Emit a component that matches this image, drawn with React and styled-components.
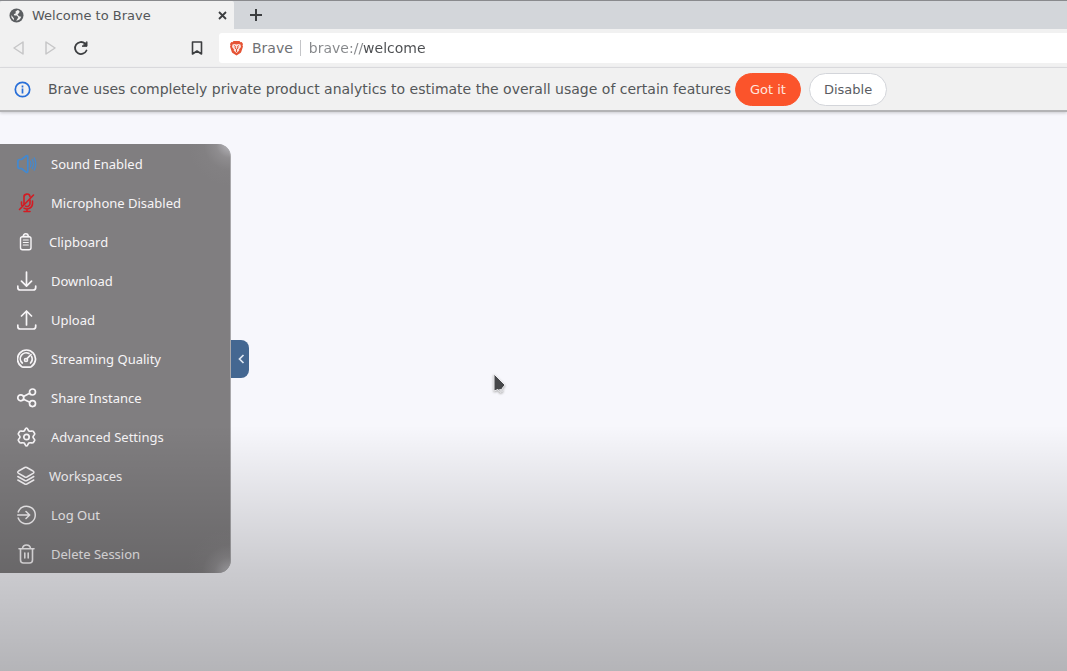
import React, { useState } from "react";
import styled, { createGlobalStyle } from "styled-components";

const GlobalStyle = createGlobalStyle`
  *, *::before, *::after { box-sizing: border-box; }
  body { margin: 0; background: #f7f7fc; }
  button, input { font: inherit; margin: 0; }
`;

const Page = styled.div`
  display: flex;
  flex-direction: column;
  min-height: 100vh;
  position: relative;
  overflow: hidden;
  background: #f7f7fc;
  color: #545759;
  font-family: "DejaVu Sans", sans-serif;
  font-size: 14px;
`;

const TabStrip = styled.header`
  display: flex;
  align-items: stretch;
  height: 29px;
  border-top: 1px solid #898a8d;
  background: #d3d6da;
`;

const Tab = styled.div`
  display: flex;
  align-items: center;
  gap: 8px;
  width: 234px;
  padding: 0 4px 0 9px;
  border-radius: 2px 2px 0 0;
  background: #f1f1f1;
  font-size: 13px;
  white-space: nowrap;
`;

const TabTitle = styled.span`
  flex: 1;
`;

const IconButton = styled.button`
  display: flex;
  align-items: center;
  justify-content: center;
  width: ${(p) => p.$width || 16}px;
  padding: 0;
  border: 0;
  background: transparent;
  color: ${(p) => (p.disabled ? "#c6c6c7" : "#3c3e40")};
`;

const Toolbar = styled.nav`
  display: flex;
  align-items: center;
  height: 39px;
  padding: 0 0 0 11px;
  border-bottom: 1px solid #dcdddf;
  background: #f1f1f1;
`;

const NavGroup = styled.div`
  display: flex;
  gap: 15px;
  width: 178px;
`;

const AddressBar = styled.label`
  display: flex;
  flex: 1;
  align-items: center;
  height: 30px;
  margin-left: 14px;
  padding-left: 10px;
  border-radius: 3px 0 0 3px;
  background: #fff;
  color: #707275;
`;

const SiteName = styled.span`
  margin-left: 8px;
  padding-right: 7px;
  border-right: 1px solid #c4c5c8;
  line-height: 16px;
`;

const AddressInput = styled.input`
  flex: 1;
  min-width: 0;
  margin-left: 8px;
  padding: 0;
  border: 0;
  outline: 0;
  background: linear-gradient(90deg, #85878a 54px, #4a4c4f 54px);
  background-clip: text;
  -webkit-background-clip: text;
  color: transparent;
  caret-color: #4a4c4f;
`;

const InfoBar = styled.section`
  display: flex;
  align-items: center;
  min-height: 44px;
  padding: 0 14px;
  border-bottom: 2px solid #b3b3b5;
  background: #f1f1f1;
  box-shadow: 0 1px 3px #c8c8cd;
`;

const Message = styled.p`
  margin: 0 4px 0 17px;
`;

const PillButton = styled.button`
  height: 33px;
  margin-right: 8px;
  padding: 0 14px;
  border: 1px solid ${(p) => (p.$primary ? "#fb542b" : "#d3d5da")};
  border-radius: 17px;
  background: ${(p) => (p.$primary ? "#fb542b" : "#fff")};
  color: ${(p) => (p.$primary ? "#ffe6df" : "#5a5c62")};
  font-size: 13px;
`;

const Workspace = styled.main`
  display: flex;
  flex: 1;
  align-items: flex-start;
  padding: 32px 0;
`;

const Drawer = styled.aside`
  display: flex;
  align-items: center;
`;

const Menu = styled.ul`
  width: 231px;
  margin: 0;
  padding: 0;
  list-style: none;
  border-right: 1px solid #a9a8ab;
  border-radius: 0 13px 13px 0;
  background:
    radial-gradient(circle at 100% 0, #b9b8bd 0, rgba(160, 158, 161, 0.45) 14px, rgba(140, 138, 140, 0.2) 26px, rgba(128, 126, 128, 0) 42px),
    radial-gradient(circle at 100% 100%, #b9b8bd 0, rgba(160, 158, 161, 0.5) 16px, rgba(140, 138, 140, 0.2) 28px, rgba(128, 126, 128, 0) 44px),
    #807e80;
`;

const MenuButton = styled.button`
  display: flex;
  align-items: center;
  gap: 14px;
  width: 100%;
  height: 39px;
  padding: 0 0 0 17px;
  border: 0;
  background: transparent;
  color: #f7f5f7;
  font-family: "Noto Sans", "Open Sans", sans-serif;
  font-size: 13px;
  text-align: left;
  white-space: nowrap;
`;

const Handle = styled.button`
  display: flex;
  align-items: center;
  justify-content: flex-end;
  width: 18px;
  height: 38px;
  padding: 0 4px 0 0;
  border: 0;
  border-radius: 0 8px 8px 0;
  background: #446791;
  color: #dfe8f3;
`;

const Shade = styled.div`
  position: absolute;
  right: 0;
  bottom: 0;
  left: 0;
  height: 246px;
  background: linear-gradient(rgba(0, 0, 0, 0), rgba(0, 0, 0, 0.18) 60%, rgba(0, 0, 0, 0.27));
  pointer-events: none;
`;

const Pointer = styled.svg`
  position: absolute;
  top: 372px;
  left: 491px;
  filter: drop-shadow(0 1px 1px #aaa);
  pointer-events: none;
`;

function Icon({ size = 20, stroke = 1.7, color = "currentColor", children, ...rest }) {
  return (
    <svg
      width={size}
      height="20"
      viewBox={`0 0 ${size} 20`}
      fill="none"
      stroke={color}
      strokeWidth={stroke}
      strokeLinecap="round"
      strokeLinejoin="round"
      aria-hidden="true"
      {...rest}
    >
      {children}
    </svg>
  );
}

const items = [
  {
    label: "Sound Enabled",
    icon: (
      <Icon color="#4289d0" stroke={1.7}>
        <path d="M3 5.500H4.500L9 2Q10.800.8 10.800 3v14q0 2.200-1.800 1L4.500 14.500H3Q.9 14.500.9 12.500v-5Q.9 5.500 3 5.500Z" />
        <path d="M13.200 7q1.500 3 0 6M15.200 5.300q2.400 4.700 0 9.400M17.200 3.800q3.200 6.200 0 12.400" strokeWidth="1.200" />
      </Icon>
    ),
  },
  {
    label: "Microphone Disabled",
    icon: (
      <Icon color="#d31b22" stroke={1.6}>
        <path d="M7 11.500V4.500a3 3 0 0 1 6-.8M13 7v3.500a3 3 0 0 1-4.500 2.600" />
        <path d="M4.500 9v1.500q0 1.500.8 2.700M15.500 8v2.500a5.500 5.500 0 0 1-8.500 4.600M10 16v2.500M7 18.500h6M16.500 2 2.500 16.500" />
      </Icon>
    ),
  },
  {
    label: "Clipboard",
    icon: (
      <Icon size={18} stroke={1.4}>
        <rect x="3.500" y="4.800" width="10.500" height="13" rx="2" />
        <path d="M5.500 4.500h6.500M6.300 4.500q0-2.700 2.500-2.700t2.500 2.700" />
        <path d="M6.300 8h5M6.300 10.500h5M6.300 13h5" strokeWidth="1.100" />
      </Icon>
    ),
  },
  {
    label: "Download",
    icon: (
      <Icon>
        <path d="M9.500 1v14M4.500 10.200l5 5 5-5M.8 15v1.500q0 2.500 2.500 2.500h12.900q2.500 0 2.500-2.500V15" />
      </Icon>
    ),
  },
  {
    label: "Upload",
    icon: (
      <Icon>
        <path d="M9.500 15V1M4.500 6l5-5 5 5M.8 15v1.500q0 2.500 2.500 2.500h12.900q2.500 0 2.500-2.500V15" />
      </Icon>
    ),
  },
  {
    label: "Streaming Quality",
    icon: (
      <Icon stroke={1.7}>
        <path d="M4.500 17.500a9 9 0 1 1 10 0q-.6.700-1.600.7H6.100q-1 0-1.600-.7Z" />
        <path d="M5.300 14a5.800 5.800 0 0 1 6.700-9.400M14.600 7.500a5.800 5.800 0 0 1-1.100 6.500M10 9.700l4-4.200" />
        <circle cx="9" cy="11" r="1.500" />
      </Icon>
    ),
  },
  {
    label: "Share Instance",
    icon: (
      <Icon>
        <circle cx="3.800" cy="9.800" r="3" />
        <circle cx="15.500" cy="4" r="3" />
        <circle cx="15.500" cy="15.600" r="3" />
        <path d="m6.500 8.500 6.200-3.200M6.500 11.200l6.300 3" />
      </Icon>
    ),
  },
  {
    label: "Advanced Settings",
    icon: (
      <Icon>
        <path d="M9.500 1c1.200 0 1.300 2.300 2.400 3 1.300.8 3.500-.5 4.300.3l1.500 2.300c.4 1.100-1.700 2-1.700 3.400s2.100 2.300 1.700 3.400l-1.500 2.300c-.8.800-3-.5-4.300.3-1.100.7-1.200 3-2.400 3s-1.300-2.300-2.400-3c-1.300-.8-3.500.5-4.300-.3l-1.500-2.300c-.4-1.100 1.700-2 1.700-3.400S.9 7.700 1.300 6.600l1.500-2.300c.8-.8 3 .5 4.300-.3 1.100-.7 1.200-3 2.400-3Z" />
        <circle cx="9.500" cy="10" r="2.700" />
      </Icon>
    ),
  },
  {
    label: "Workspaces",
    icon: (
      <Icon size={18} stroke={1.5}>
        <path d="M7.800 1.500q1-.5 2 0L16 5q1.800 1.200 0 2.400L9.900 11q-1 .5-2 0L1.600 7.400Q-.2 6.200 1.600 5Z" />
        <path d="m.8 10.500 7 4q1 .5 2 0l7-4M.8 14l7 4q1 .5 2 0l7-4" />
      </Icon>
    ),
  },
  {
    label: "Log Out",
    icon: (
      <Icon stroke={1.5}>
        <path d="M1.200 7a8.800 8.800 0 1 1 0 6M.7 10h12M9 6.500l3.700 3.500L9 13.500" />
      </Icon>
    ),
  },
  {
    label: "Delete Session",
    icon: (
      <Icon stroke={1.6}>
        <path d="M2 4.800h15M5.500 4.500Q6 1 9.500 1t4 3.500M3.500 5v11q0 3 3 3h6q3 0 3-3V5M7.800 9v5M11.200 9v5" />
      </Icon>
    ),
  },
];

export default function App() {
  const [address, setAddress] = useState("brave://welcome");

  return (
    <>
      <GlobalStyle />
      <Page>
        <TabStrip>
          <Tab>
            <svg width="15" height="15" viewBox="0 0 15 15" aria-hidden="true">
              <circle cx="7.500" cy="7.500" r="7" fill="#5b5e61" />
              <path d="M8.700 2 6.500 3.500l.3 1.700-2 1 .5 1.300h2.500l1.500 1.700-.8 1.600-1.300 2q4-.5 5-4l-2.200-.5-1.500-1.800 1.500-1.500.7-1.300Q10 2.300 8.700 2ZM2.300 7l.2 2.500 2.200 2.800.3-1.700-1.200-1.500Z" fill="#f1f1f1" />
            </svg>
            <TabTitle>Welcome to Brave</TabTitle>
            <IconButton type="button" aria-label="Close tab">
              <svg width="9" height="9" viewBox="0 0 9 9" stroke="currentColor" strokeWidth="1.800">
                <path d="m1 1 7 7M8 1 1 8" />
              </svg>
            </IconButton>
          </Tab>
          <IconButton type="button" aria-label="New tab" $width={44}>
            <svg width="12" height="12" viewBox="0 0 12 12" stroke="currentColor" strokeWidth="2">
              <path d="M6 0v12M0 6h12" />
            </svg>
          </IconButton>
        </TabStrip>

        <Toolbar aria-label="Navigation">
          <NavGroup>
            <IconButton type="button" aria-label="Back" disabled>
              <svg width="14" height="16" viewBox="0 0 14 16" fill="none" stroke="currentColor" strokeWidth="1.500" strokeLinejoin="round">
                <path d="M11 2v12L2 8Z" />
              </svg>
            </IconButton>
            <IconButton type="button" aria-label="Forward" disabled>
              <svg width="14" height="16" viewBox="0 0 14 16" fill="none" stroke="currentColor" strokeWidth="1.500" strokeLinejoin="round">
                <path d="M3 2v12l9-6Z" />
              </svg>
            </IconButton>
            <IconButton type="button" aria-label="Reload">
              <svg width="16" height="16" viewBox="0 0 16 16" fill="none" stroke="currentColor" strokeWidth="1.800" strokeLinecap="round">
                <path d="M13.500 10.500A6 6 0 1 1 12 3.500" />
                <path d="M14 2v4.300H9.500Z" fill="currentColor" strokeWidth="1" strokeLinejoin="round" />
              </svg>
            </IconButton>
          </NavGroup>
          <IconButton type="button" aria-label="Bookmark">
            <svg width="12" height="16" viewBox="0 0 12 16" fill="none" stroke="currentColor" strokeWidth="1.600" strokeLinejoin="round">
              <path d="M1.500 2h9v12L6 11l-4.500 3Z" />
            </svg>
          </IconButton>
          <AddressBar>
            <svg width="15" height="16" viewBox="0 0 15 16" aria-hidden="true">
              <path d="M4.500 1h6l1 1.200 1.200-.2L14 4l-.5 1.500.5 1-1.700 5.200q-.4 1-1.300 1.600L7.500 15.500 4 13.300q-.9-.6-1.300-1.600L1 6.500l.5-1L1 4l1.300-2 1.200.2Z" fill="#e55334" />
              <path d="m3.500 4.500 2-.5L7.500 4.500l2-.5 2 .5L12 7l-2 2.500.3 1-2.800 2.500-2.800-2.500.3-1L3 7Z" fill="#fbe3dd" />
              <path d="m5 5.500 1.500 1L6 8l1.500 1.200L9 8l-.5-1.500 1.500-1M7.500 9v3" fill="none" stroke="#e55334" />
            </svg>
            <SiteName>Brave</SiteName>
            <AddressInput
              aria-label="Address"
              value={address}
              spellCheck="false"
              onChange={(event) => setAddress(event.target.value)}
            />
          </AddressBar>
        </Toolbar>

        <InfoBar>
          <svg width="17" height="17" viewBox="0 0 17 17" fill="none" stroke="#286fd8" strokeWidth="1.700" aria-hidden="true">
            <circle cx="8.500" cy="8.500" r="7.200" />
            <path d="M8.500 7.500v5M8.500 4.500v2" />
          </svg>
          <Message>
            Brave uses completely private product analytics to estimate the overall usage of certain features
          </Message>
          <PillButton type="button" $primary>Got it</PillButton>
          <PillButton type="button">Disable</PillButton>
        </InfoBar>

        <Workspace>
          <Drawer>
            <Menu>
              {items.map((item) => (
                <li key={item.label}>
                  <MenuButton type="button">
                    {item.icon}
                    {item.label}
                  </MenuButton>
                </li>
              ))}
            </Menu>
            <Handle type="button" aria-label="Collapse menu">
              <svg width="7" height="10" viewBox="0 0 7 10" fill="none" stroke="currentColor" strokeWidth="1.700">
                <path d="M5.500 1 1.500 5l4 4" />
              </svg>
            </Handle>
          </Drawer>
        </Workspace>
        <Shade />
        <Pointer width="18" height="24" viewBox="0 0 18 24" aria-hidden="true">
          <path d="M3 2v17l4-1.500 2 3 3-1.500-.5-3L14 13Z" fill="#46474a" stroke="#eeeef1" strokeWidth="1" />
          <path d="m7.500 17.500 2 3 2.500-1.200-.5-2.800" fill="#d9d9dc" />
        </Pointer>
      </Page>
    </>
  );
}
